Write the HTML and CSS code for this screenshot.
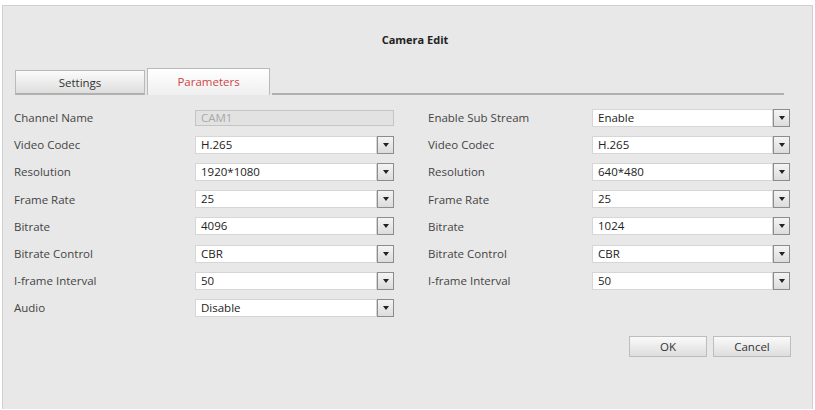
FILE: index.html
```html
<html>
  <head>
    <title>Camera Edit</title>
    <meta charset="utf-8" />
    <link rel="stylesheet" href="styles.css">
  </head>
  <body>
    <div class="dialog">
      <div class="title">Camera Edit</div>

      <div class="tabs">
        <div class="tab">Settings</div>
        <div class="tab active">Parameters</div>
        <div class="tab-line"></div>
      </div>

      <div class="form">
        <div class="column main">
          <div class="row">
            <span class="label">Channel Name</span>
            <div class="input disabled">CAM1</div>
          </div>
          <div class="row">
            <span class="label">Video Codec</span>
            <div class="select"><div class="value">H.265</div><div class="arrow"></div></div>
          </div>
          <div class="row">
            <span class="label">Resolution</span>
            <div class="select"><div class="value">1920*1080</div><div class="arrow"></div></div>
          </div>
          <div class="row">
            <span class="label">Frame Rate</span>
            <div class="select"><div class="value">25</div><div class="arrow"></div></div>
          </div>
          <div class="row">
            <span class="label">Bitrate</span>
            <div class="select"><div class="value">4096</div><div class="arrow"></div></div>
          </div>
          <div class="row">
            <span class="label">Bitrate Control</span>
            <div class="select"><div class="value">CBR</div><div class="arrow"></div></div>
          </div>
          <div class="row">
            <span class="label">I-frame Interval</span>
            <div class="select"><div class="value">50</div><div class="arrow"></div></div>
          </div>
          <div class="row">
            <span class="label">Audio</span>
            <div class="select"><div class="value">Disable</div><div class="arrow"></div></div>
          </div>
        </div>

        <div class="column sub">
          <div class="row">
            <span class="label">Enable Sub Stream</span>
            <div class="select"><div class="value">Enable</div><div class="arrow"></div></div>
          </div>
          <div class="row">
            <span class="label">Video Codec</span>
            <div class="select"><div class="value">H.265</div><div class="arrow"></div></div>
          </div>
          <div class="row">
            <span class="label">Resolution</span>
            <div class="select"><div class="value">640*480</div><div class="arrow"></div></div>
          </div>
          <div class="row">
            <span class="label">Frame Rate</span>
            <div class="select"><div class="value">25</div><div class="arrow"></div></div>
          </div>
          <div class="row">
            <span class="label">Bitrate</span>
            <div class="select"><div class="value">1024</div><div class="arrow"></div></div>
          </div>
          <div class="row">
            <span class="label">Bitrate Control</span>
            <div class="select"><div class="value">CBR</div><div class="arrow"></div></div>
          </div>
          <div class="row">
            <span class="label">I-frame Interval</span>
            <div class="select"><div class="value">50</div><div class="arrow"></div></div>
          </div>
        </div>
      </div>

      <div class="buttons">
        <div class="button">OK</div>
        <div class="button">Cancel</div>
      </div>
    </div>
  </body>
</html>
```

FILE: styles.css
```css
body{
    margin: 0;
    padding: 0;
    background-color: #ffffff;
    font-family: "Open Sans", "DejaVu Sans", sans-serif;
    font-size: 11.5px;
    color: #3a3a3a;
}

.dialog{
    margin: 5px 2px 0 2px;
    height: 404px;
    box-sizing: border-box;
    border: 1px solid #cfcfcf;
    border-bottom: none;
    background-color: #e8e8e8;
}

.title{
    text-align: center;
    padding: 26px 0 0 15px;
    height: 36px;
    font-weight: bold;
    font-size: 11px;
    color: #222;
}

.tabs{
    display: flex;
    align-items: flex-end;
    padding-left: 12px;
    height: 27px;
}

.tab{
    width: 130px;
    height: 25px;
    box-sizing: border-box;
    margin-right: 2px;
    border: 1px solid #b9b9b9;
    border-bottom: 2px solid #b0b0b0;
    background: linear-gradient(#fbfbfb, #dedede);
    text-align: center;
    line-height: 23px;
    color: #333;
}

.tab.active{
    width: 123px;
    height: 27px;
    border-bottom: none;
    background: linear-gradient(#ffffff, #efefef);
    color: #d04444;
    line-height: 25px;
}

.tab-line{
    width: 512px;
    height: 2px;
    background-color: #b0b0b0;
}

.form{
    display: flex;
    padding: 9px 0 0 11px;
    gap: 34px;
}

.row{
    display: flex;
    align-items: center;
    height: 27.2px;
}

.label{
    width: 181px;
    color: #444;
}

.sub .label{
    width: 164px;
}

.input{
    width: 199px;
    height: 16px;
    box-sizing: border-box;
    border: 1px solid #c4c4c4;
    padding-left: 5px;
    line-height: 14px;
}

.input.disabled{
    background-color: #e2e2e2;
    color: #a8a8a8;
}

.select{
    display: flex;
    width: 199px;
    height: 18px;
}

.sub .select{
    width: 198px;
}

.value{
    flex: 1;
    box-sizing: border-box;
    border: 1px solid #d6d6d6;
    background-color: #ffffff;
    padding-left: 5px;
    line-height: 16px;
    color: #222;
}

.arrow{
    width: 17px;
    height: 18px;
    box-sizing: border-box;
    border: 1px solid #8c8c8c;
    background: linear-gradient(#f4f4f4, #dcdcdc);
    display: flex;
    align-items: center;
    justify-content: center;
}

.arrow::after{
    content: "";
    border-left: 3px solid transparent;
    border-right: 3px solid transparent;
    border-top: 4px solid #222;
}

.buttons{
    display: flex;
    justify-content: flex-end;
    gap: 6px;
    padding: 14px 21px 0 0;
}

.button{
    width: 78px;
    height: 21px;
    box-sizing: border-box;
    border: 1px solid #bdbdbd;
    background: linear-gradient(#fafafa, #dddddd);
    text-align: center;
    line-height: 19px;
    color: #333;
}
```
